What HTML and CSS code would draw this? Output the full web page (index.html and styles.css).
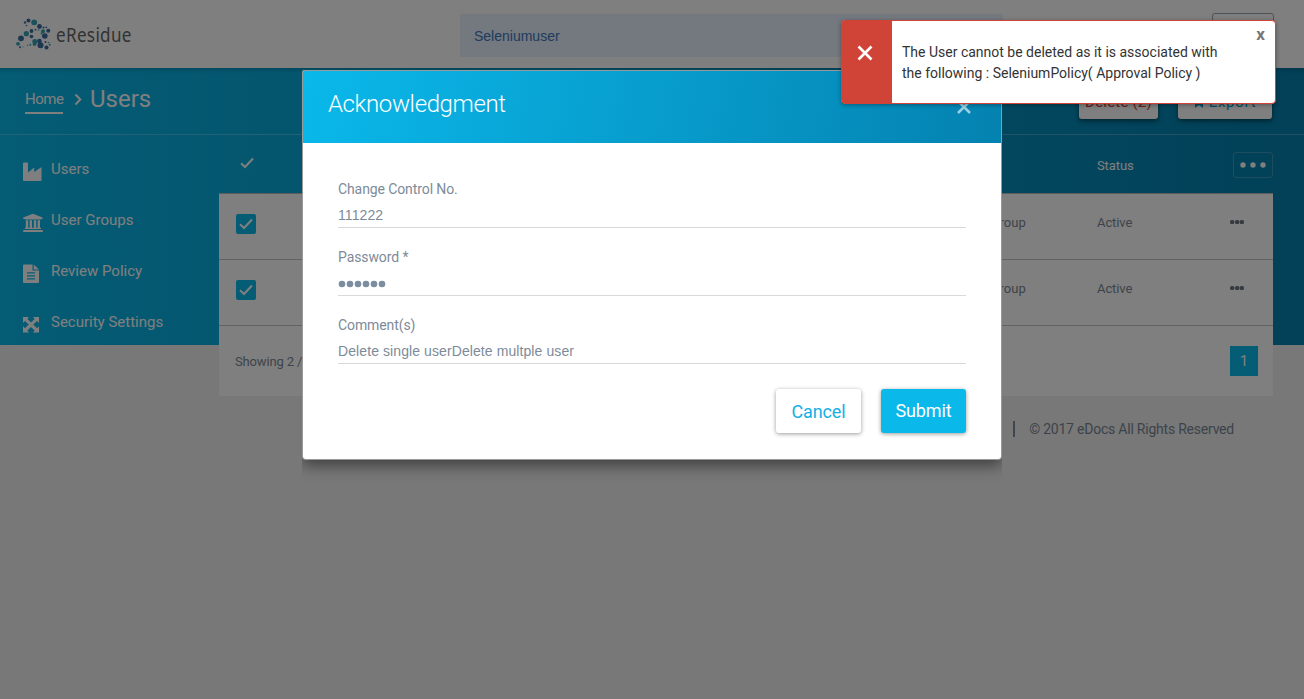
FILE: index.html
```html
<!DOCTYPE html>
<html lang="en">
<head>
<meta charset="utf-8">
<title>eResidue - Users</title>
<link rel="stylesheet" href="styles.css">
</head>
<body>
<div class="app">
  <header class="topbar">
    <div class="brand">
      <svg class="logo" width="36" height="34" viewBox="0 0 36 34">
        <g fill="#3a6ea0">
          <circle cx="12.5" cy="3.500" r="2"/><circle cx="23.500" cy="9.500" r="2.400"/><circle cx="15.500" cy="14" r="1.900"/><circle cx="28.800" cy="19" r="2.800"/><circle cx="32.300" cy="13.800" r="2"/><circle cx="5" cy="21.300" r="2.900"/><circle cx="15.500" cy="19.500" r="1.800"/><circle cx="24.500" cy="28.300" r="3"/><circle cx="30.500" cy="30.500" r="2"/><circle cx="23.500" cy="24" r="2.300"/><circle cx="9" cy="5.500" r="1.200"/><circle cx="27.500" cy="10.500" r="1"/><circle cx="4" cy="30.300" r="1"/><circle cx="29.500" cy="25" r="1"/><circle cx="19.500" cy="12.700" r=".9"/><circle cx="10.500" cy="8.500" r=".8"/><circle cx="30.300" cy="10.300" r=".9"/>
        </g>
        <g fill="#38a0b4">
          <circle cx="18.200" cy="5.300" r="2.900"/><circle cx="10.300" cy="16.700" r="2.600"/><circle cx="27" cy="14.200" r="2"/><circle cx="2" cy="26.800" r="1.900"/><circle cx="18.900" cy="24.500" r="2.600"/><circle cx="18.500" cy="27.300" r="1.700"/><circle cx="14.300" cy="27.700" r="1"/><circle cx="33.700" cy="27.800" r="1"/><circle cx="32.500" cy="25.500" r=".8"/><circle cx="25.500" cy="16.500" r="1"/><circle cx="7" cy="29.800" r=".6"/><circle cx="11.500" cy="28.300" r=".7"/><circle cx="22.500" cy="13" r=".8"/>
        </g>
      </svg>
      <span class="brand-name">eResidue</span>
    </div>
    <div class="search">Seleniumuser</div>
    <div class="account"></div>
  </header>
  <main class="main">
    <div class="titlebar">
      <a class="home">Home</a>
      <svg class="crumb" width="8" height="13" viewBox="0 0 8 13"><path d="M1.500 1.500 6.300 6.500 1.500 11.500" fill="none" stroke="#fff" stroke-width="2"/></svg>
      <h1 class="title">Users</h1>
      <div class="actions">
        <button class="action delete">Delete (2)</button>
        <button class="action export"><svg width="10" height="11" viewBox="0 0 10 11"><path d="M1 0H9V11L5 8 1 11Z" fill="currentColor"/></svg>Export</button>
      </div>
    </div>
    <div class="content">
      <nav class="sidebar">
        <a class="item"><svg width="20" height="20" viewBox="0 0 20 20"><path d="M0 1.500Q0 .5 1 .5H4Q5 .5 5 1.500V10.500L11.200 5.500V10L18.500 5V18Q18.500 19 17.500 19H1Q0 19 0 18Z"/></svg><span>Users</span></a>
        <a class="item"><svg width="20" height="20" viewBox="0 0 20 20"><path d="M10 .8 19.500 4.500V6H18Q18 6.500 17.500 6.500H2.500Q2 6.500 2 6H.2V4.500ZM2.800 7.300H5.200V14.800H6.600V7.300H9V14.800H10.800V7.300H13.200V14.800H14.600V7.300H17V14.800H18V16H1.800V14.800H2.800ZM.2 17H19.800V19H.2Z"/></svg><span>User Groups</span></a>
        <a class="item"><svg width="20" height="20" viewBox="0 0 20 20"><path fill-rule="evenodd" d="M1 .5H9.500V6.500H16V18Q16 19 15 19H1Q0 19 0 18V1.500Q0 .5 1 .5ZM4 8.300V9.500H12V8.300ZM4 11.300V12.500H12V11.300ZM4 14.300V15.500H12V14.300ZM10.700 .5 16 5.500H10.700Z"/></svg><span>Review Policy</span></a>
        <a class="item"><svg width="20" height="20" viewBox="0 0 20 20"><path d="M.5 2H6L4.300 4 8 7.500 11.700 4 10 2H16V8L14 6 10.300 9.600 14 13.300 16 11.300V17.500H10L11.700 15.500 8 11.900 4.300 15.500 6 17.500H0V11.300L2 13.300 5.700 9.600 2 6 0 8V2Z"/></svg><span>Security Settings</span></a>
      </nav>
      <section class="panel">
        <div class="row head">
          <span class="check pale"><svg width="14" height="12" viewBox="0 0 14 12"><path d="M1 6.300 5 10 13 1.500"/></svg></span>
          <span></span><span>Status</span>
          <span class="more-box"><svg width="26" height="6" viewBox="0 0 26 6"><circle cx="3" cy="3" r="2.700"/><circle cx="13" cy="3" r="2.700"/><circle cx="23" cy="3" r="2.700"/></svg></span>
        </div>
        <div class="row">
          <span class="check"><svg width="14" height="12" viewBox="0 0 14 12"><path d="M1 6.300 5 10 13 1.500"/></svg></span>
          <span class="group">User Group</span><span>Active</span>
          <svg class="more" width="14" height="6" viewBox="0 0 14 6"><rect x="0" y="1" width="4.300" height="4" rx="1.500"/><rect x="5" y="1" width="4.300" height="4" rx="1.500"/><rect x="9.700" y="1" width="4.300" height="4" rx="1.500"/></svg>
        </div>
        <div class="row">
          <span class="check"><svg width="14" height="12" viewBox="0 0 14 12"><path d="M1 6.300 5 10 13 1.500"/></svg></span>
          <span class="group">User Group</span><span>Active</span>
          <svg class="more" width="14" height="6" viewBox="0 0 14 6"><rect x="0" y="1" width="4.300" height="4" rx="1.500"/><rect x="5" y="1" width="4.300" height="4" rx="1.500"/><rect x="9.700" y="1" width="4.300" height="4" rx="1.500"/></svg>
        </div>
        <div class="pager"><span>Showing 2 / 2</span><span class="page">1</span></div>
      </section>
    </div>
    <footer class="footer"><span class="bar"></span>© 2017 eDocs All Rights Reserved</footer>
  </main>
</div>
<div class="backdrop"></div>
<div class="modal">
  <div class="modal-head">
    <h2 class="modal-title">Acknowledgment</h2>
    <svg class="modal-close" width="14" height="14" viewBox="0 0 14 14"><path d="M1 1 13 13M13 1 1 13"/></svg>
  </div>
  <div class="modal-body">
    <div class="field"><div class="label">Change Control No.</div><div class="value">111222</div></div>
    <div class="field"><div class="label">Password *</div><div class="value"><svg width="50" height="8" viewBox="0 0 50 8"><circle cx="4" cy="4" r="3.300"/><circle cx="12" cy="4" r="3.300"/><circle cx="20" cy="4" r="3.300"/><circle cx="28" cy="4" r="3.300"/><circle cx="36" cy="4" r="3.300"/><circle cx="44" cy="4" r="3.300"/></svg></div></div>
    <div class="field"><div class="label">Comment(s)</div><div class="value">Delete single userDelete multple user</div></div>
    <div class="buttons"><button class="btn cancel">Cancel</button><button class="btn submit">Submit</button></div>
  </div>
</div>
<div class="toast">
  <div class="toast-icon"><svg width="16" height="16" viewBox="0 0 16 16"><path d="M1.500 1.500 14.500 14.500M14.500 1.500 1.500 14.500"/></svg></div>
  <div class="toast-text">The User cannot be deleted as it is associated with<br>the following : SeleniumPolicy( Approval Policy )</div>
  <span class="toast-close">x</span>
</div>
</body>
</html>
```
FILE: styles.css
```css
* { box-sizing: border-box; }
body { margin: 0; width: 1304px; height: 699px; overflow: hidden; background: #f1f1f1; font-family: Roboto, sans-serif; font-size: 13px; color: #7b8794; }
h1, h2 { margin: 0; font-weight: 400; }
button { font-family: inherit; border: 0; padding: 0; }
.topbar { display: flex; height: 68px; background: #fff; }
.brand { display: flex; width: 460px; padding: 17px 0 0 16px; gap: 4px; }
.brand-name { font-family: "Noto Sans", sans-serif; font-size: 19px; line-height: 36px; color: #666; letter-spacing: .35px; transform: scaleX(.9); transform-origin: left; }
.search { width: 543px; height: 43px; margin-top: 14px; padding-left: 14px; background: #e8f0fe; color: #3d78bd; font: 14px/44px "Liberation Sans", Arial, sans-serif; }
.account { width: 62px; height: 40px; margin: 13px 0 0 209px; border: 1px solid #97a4b0; border-radius: 3px; }
.main { background: linear-gradient(90deg, #0ab8ea 0%, #0482b0 100%) 0 0 / 100% 277px no-repeat; }
.titlebar { display: flex; height: 67px; padding-left: 25px; border-bottom: 1px solid rgba(255,255,255,.25); color: #fff; box-shadow: inset 0 5px 5px -4px rgba(0,0,0,.25); }
.home { width: 38px; height: 23px; margin-top: 23px; border-bottom: 2px solid #fff; font-size: 15px; line-height: 17px; letter-spacing: -.45px; }
.crumb { margin: 25px 8px 0 11px; }
.title { margin-top: 15px; font-size: 24px; line-height: 32px; }
.actions { display: flex; gap: 20px; margin: 15px 32px 0 auto; }
.action { display: flex; align-items: center; justify-content: center; gap: 5px; height: 36px; padding-top: 2px; border-radius: 3px; background: #fff; font-size: 15px; letter-spacing: .7px; box-shadow: 0 2px 5px rgba(0,0,0,.5); }
.delete { width: 79px; color: #d04437; letter-spacing: .2px; }
.export { width: 94px; color: #0a9fd0; }
.content { display: flex; height: 261px; }
.sidebar { width: 219px; padding-top: 8px; }
.item { display: flex; height: 51px; padding-left: 23px; gap: 8px; color: #fff; font-size: 15px; line-height: 52px; }
.item svg { margin-top: 19px; fill: #fff; }
.panel { width: 1054px; background: #fff; }
.row { display: grid; grid-template-columns: 742px 136px 133px 43px; height: 66px; border-bottom: 1px solid #c5c5c5; padding-top: 20px; line-height: 18px; }
.row > span:nth-child(3) { padding-left: 0; letter-spacing: -.1px; }
.row.head { height: 59px; padding-top: 22px; color: #fff; background: linear-gradient(90deg, #0ab8ea 0%, #0482b0 100%) -219px 0 / 1304px 100%; grid-template-columns: 742px 136px 136px 40px; border-bottom-color: #bbb; }
.check { display: block; width: 20px; height: 20px; margin-left: 17px; border-radius: 2px; background: #0ab8ea; padding: 4px 3px; line-height: 0; }
.check.pale { margin: -4px 0 0 18px; background: #0aadde; }
.check path { fill: none; stroke: #fff; stroke-width: 2; }
.more { margin: 5px 0 0; fill: #6c7682; }
.more-box { display: flex; justify-content: center; align-items: center; width: 40px; height: 26px; margin-top: -5px; border: 1px solid #3a9cc0; border-radius: 3px; }
.more-box svg { fill: #fff; }
.pager { display: flex; justify-content: space-between; align-items: center; height: 70px; padding: 0 15px 0 16px; letter-spacing: -.15px; }
.page { width: 28px; height: 30px; background: #0ab8ea; color: #fff; text-align: center; font-size: 15px; line-height: 31px; }
.footer { display: flex; align-items: center; justify-content: flex-end; height: 66px; padding-right: 70px; font-size: 14px; letter-spacing: -.22px; }
.bar { width: 2px; height: 16px; margin-right: 14px; background: #7b8da3; }
.backdrop { position: absolute; inset: 0; background: rgba(0,0,0,.5); }
.modal { position: absolute; left: 302px; top: 69px; width: 700px; height: 391px; padding-top: 1px; border: 1px solid #999; border-top: 0; border-radius: 4px; background: #999; box-shadow: 0 5px 15px rgba(0,0,0,.5); clip-path: inset(1px 0 -22px 0); }
.modal-head { display: flex; justify-content: space-between; height: 73px; padding: 19px 30px 0 25px; border-top: 1px solid #999; border-radius: 3px 3px 0 0; background: linear-gradient(100deg, #0ab8ea, #0482b0); color: #fff; }
.modal-title { font-size: 24px; font-weight: 300; line-height: 28px; letter-spacing: -.38px; }
.modal-close { margin-top: 10px; fill: none; stroke: #9bd0e5; stroke-width: 2.500; }
.modal-body { height: 316px; padding: 35px 35px 0; border-radius: 0 0 3px 3px; background: #fff; color: #7d8b99; }
.field { height: 50px; margin-bottom: 18px; border-bottom: 1px solid #d9d9d9; }
.label { font-size: 14px; line-height: 22px; letter-spacing: -.1px; }
.value { padding-top: 5px; font: 14px/21px "Liberation Sans", Arial, sans-serif; letter-spacing: .09px; height: 27px; }
.value svg { display: block; margin-top: 7px; fill: #7b8d9f; }
.buttons { display: flex; justify-content: flex-end; gap: 20px; margin-top: 25px; }
.btn { width: 85px; height: 44px; border-radius: 3px; font-size: 18px; letter-spacing: -.1px; box-shadow: 0 1px 4px rgba(0,0,0,.4); }
.cancel { background: #fff; color: #15b0e3; }
.submit { padding-bottom: 2px; background: #0ab8ea; color: #fff; }
.toast { position: absolute; left: 841px; top: 20px; width: 435px; height: 84px; display: flex; border: 1px solid #d04437; border-radius: 4px; background: #fff; color: #333; box-shadow: 0 1px 4px rgba(0,0,0,.35); }
.toast-icon { width: 50px; padding: 24px 0 0 15px; background: #d04437; }
.toast-icon path { stroke: #fff; stroke-width: 2.600; }
.toast-text { padding: 21px 0 0 10px; font-size: 14px; line-height: 21px; white-space: nowrap; }
.toast-close { position: absolute; right: 10px; top: 5px; color: #777; font-size: 17px; font-weight: 700; line-height: 16px; }
```
